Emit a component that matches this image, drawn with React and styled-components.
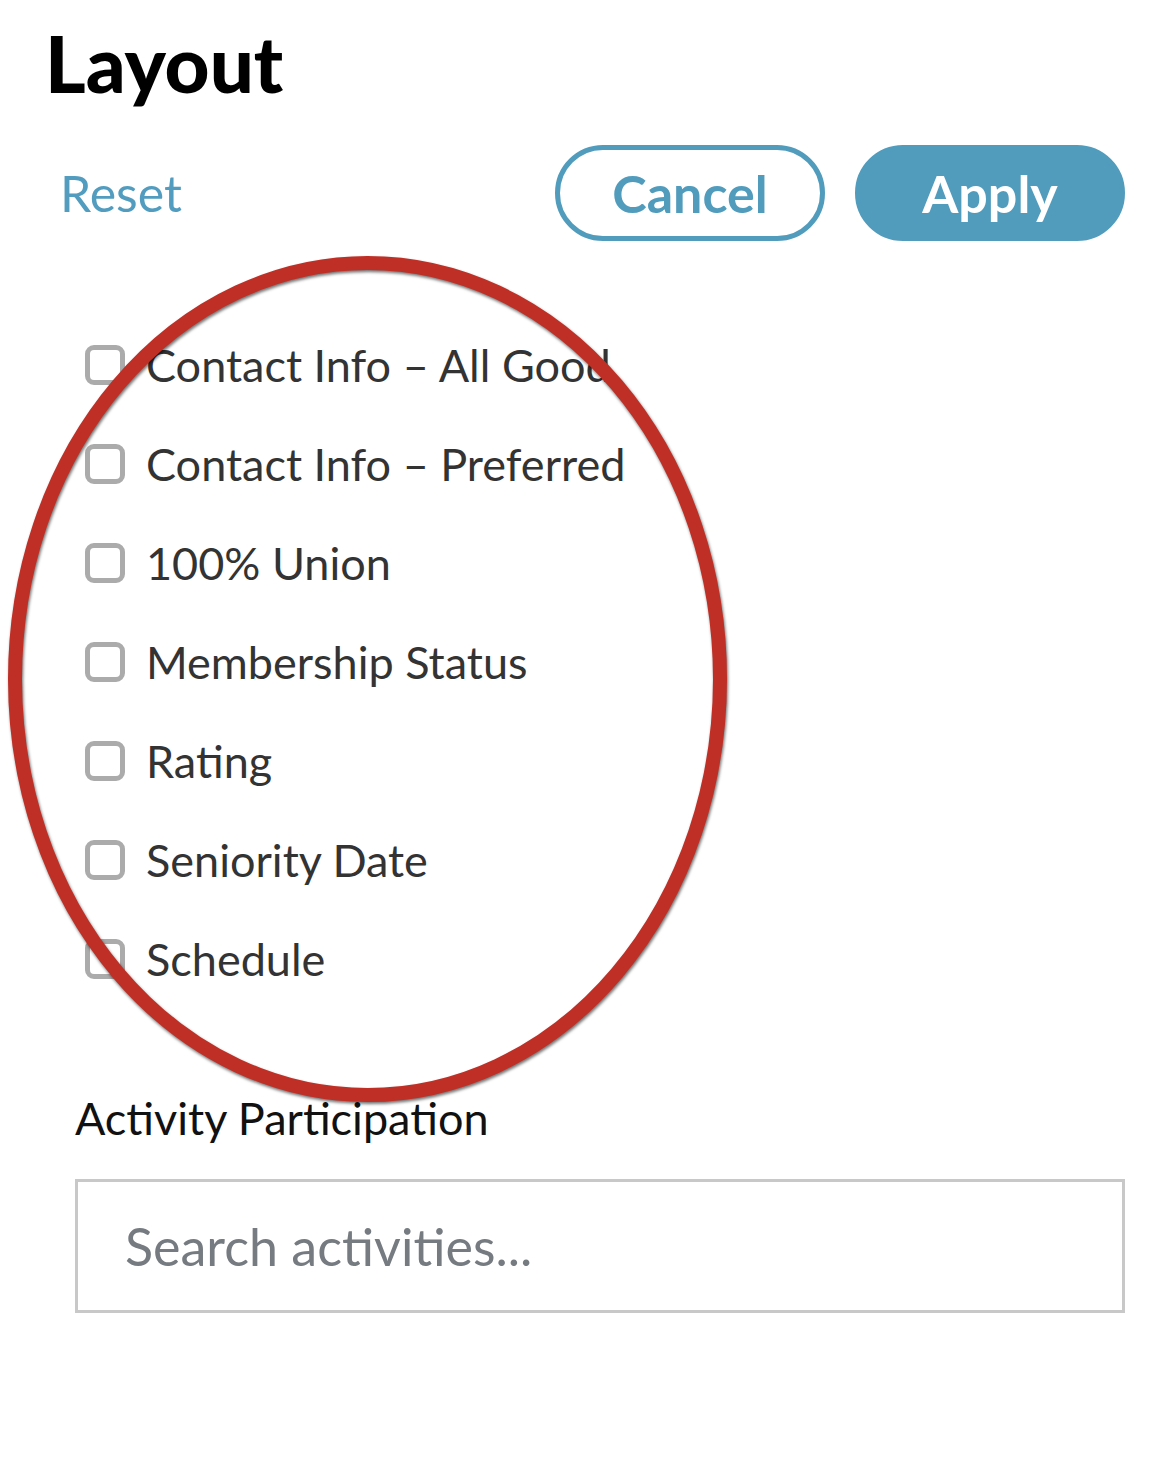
import React from "react";
import styled, { createGlobalStyle } from "styled-components";

const Global = createGlobalStyle`
  html, body { margin: 0; padding: 0; background: #fff; }
  body { font-family: Lato, "Open Sans", sans-serif; -webkit-font-smoothing: antialiased; }
  * { box-sizing: border-box; }
`;

const Page = styled.div`
  position: relative;
  width: 1170px;
  min-height: 1477px;
  padding: 0 45px 0 0;
  display: flex;
  flex-direction: column;
`;

const Title = styled.h1`
  margin: 18px 0 0 45px;
  font-family: Lato, sans-serif;
  font-weight: 900;
  font-size: 78px;
  line-height: 90px;
  color: #000;
`;

const Toolbar = styled.div`
  margin-top: 37px;
  display: flex;
  align-items: center;
  justify-content: space-between;
  padding-left: 60px;
`;

const Reset = styled.button`
  border: none;
  background: none;
  padding: 0;
  font-family: Lato, sans-serif;
  font-size: 50px;
  color: #529dbf;
  cursor: pointer;
`;

const Actions = styled.div`
  display: flex;
  gap: 30px;
`;

const PillButton = styled.button`
  width: 270px;
  height: 96px;
  border-radius: 48px;
  border: 5px solid #519cbd;
  background: ${(p) => (p.$primary ? "#519cbd" : "#fff")};
  color: ${(p) => (p.$primary ? "#fff" : "#519cbd")};
  font-family: Lato, sans-serif;
  font-weight: 700;
  font-size: 52px;
  display: flex;
  align-items: center;
  justify-content: center;
  cursor: pointer;
`;

const List = styled.ul`
  list-style: none;
  margin: 104px 0 0 85px;
  padding: 0;
  display: flex;
  flex-direction: column;
  gap: 59px;
`;

const Row = styled.li`
  display: flex;
  align-items: center;
  gap: 21px;
  height: 40px;
`;

const Box = styled.span`
  flex: none;
  width: 40px;
  height: 40px;
  border: 5px solid #ababab;
  border-radius: 9px;
  background: #fff;
`;

const Label = styled.span`
  font-family: Lato, sans-serif;
  font-size: 45px;
  color: #333;
  white-space: nowrap;
`;

const Section = styled.div`
  margin: 112px 0 0 75px;
  display: flex;
  flex-direction: column;
`;

const SectionLabel = styled.div`
  font-family: Lato, sans-serif;
  font-size: 45px;
  line-height: 54px;
  color: #111;
`;

const Search = styled.input`
  margin-top: 34px;
  width: 1050px;
  height: 134px;
  border: 3px solid #c8c8c8;
  border-radius: 0;
  padding: 0 0 0 47px;
  font-family: Lato, sans-serif;
  font-size: 52px;
  color: #333;
  outline: none;
  &::placeholder { color: #757b80; }
`;

const Annotation = styled.svg`
  position: absolute;
  left: 0;
  top: 240px;
  width: 760px;
  height: 880px;
  pointer-events: none;
  overflow: visible;
  filter: drop-shadow(1px 2px 1.5px rgba(0, 0, 0, 0.55));
`;

const items = [
  "Contact Info – All Good",
  "Contact Info – Preferred",
  "100% Union",
  "Membership Status",
  "Rating",
  "Seniority Date",
  "Schedule",
];

export default function App() {
  return (
    <>
      <Global />
      <Page>
        <Title>Layout</Title>
        <Toolbar>
          <Reset>Reset</Reset>
          <Actions>
            <PillButton>Cancel</PillButton>
            <PillButton $primary>Apply</PillButton>
          </Actions>
        </Toolbar>
        <List>
          {items.map((t) => (
            <Row key={t}>
              <Box />
              <Label>{t}</Label>
            </Row>
          ))}
        </List>
        <Section>
          <SectionLabel>Activity Participation</SectionLabel>
          <Search placeholder="Search activities..." />
        </Section>
        <Annotation viewBox="0 240 760 880">
          <ellipse cx="367.5" cy="679" rx="352.5" ry="416" fill="none" stroke="#bf2f26" strokeWidth="14" />
        </Annotation>
      </Page>
    </>
  );
}
